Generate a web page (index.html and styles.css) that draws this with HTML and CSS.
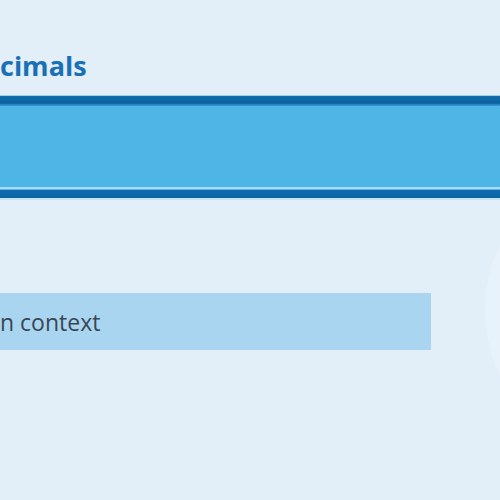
FILE: index.html
```html
<!DOCTYPE html>
<html>
<head>
<meta charset="utf-8">
<link rel="stylesheet" href="styles.css">
</head>
<body>
<div class="page">
  <h1 class="title">cimals</h1>
  <div class="band">
    <div class="edge edge-top"></div>
    <div class="band-fill"></div>
    <div class="edge edge-bottom"></div>
  </div>
  <div class="note"><span class="note-text">n context</span></div>
  <div class="glow"></div>
</div>
</body>
</html>
```
FILE: styles.css
```css
html, body {
  margin: 0;
  padding: 0;
  background: #e2eff9;
}
.page {
  position: relative;
  width: 500px;
  height: 500px;
  overflow: hidden;
  display: flex;
  flex-direction: column;
  font-family: "Open Sans", "Noto Sans", sans-serif;
}
.title {
  margin: 47px 0 0 0;
  height: 48px;
  font-size: 27px;
  font-weight: 700;
  color: #1a70b4;
  line-height: 38px;
}
.band {
  display: flex;
  flex-direction: column;
  height: 105px;
}
.edge {
  flex: none;
}
.edge-top {
  border-top: 1px solid #a6cfea;
  background: linear-gradient(#106fab, #0a62a0 70%, #3f9ed6);
  height: 10px;
}
.band-fill {
  flex: 1;
  background: #4fb4e6;
}
.edge-bottom {
  height: 13px;
  background: linear-gradient(#a9dcf4 0, #a9dcf4 2px, #5eb5e2 2px, #5eb5e2 3px, #0c6cae 3px, #0a66a6 11px, #c3e2f4 11px);
}
.note {
  margin-top: 93px;
  width: 431px;
  height: 57px;
  background: #a9d5f1;
  display: flex;
  align-items: center;
}
.note-text {
  margin-left: 0;
  font-size: 23px;
  color: #3a4654;
}
.glow {
  position: absolute;
  left: 485px;
  top: 160px;
  width: 300px;
  height: 300px;
  border-radius: 50%;
  background: rgba(255, 255, 255, 0.18);
}
```
